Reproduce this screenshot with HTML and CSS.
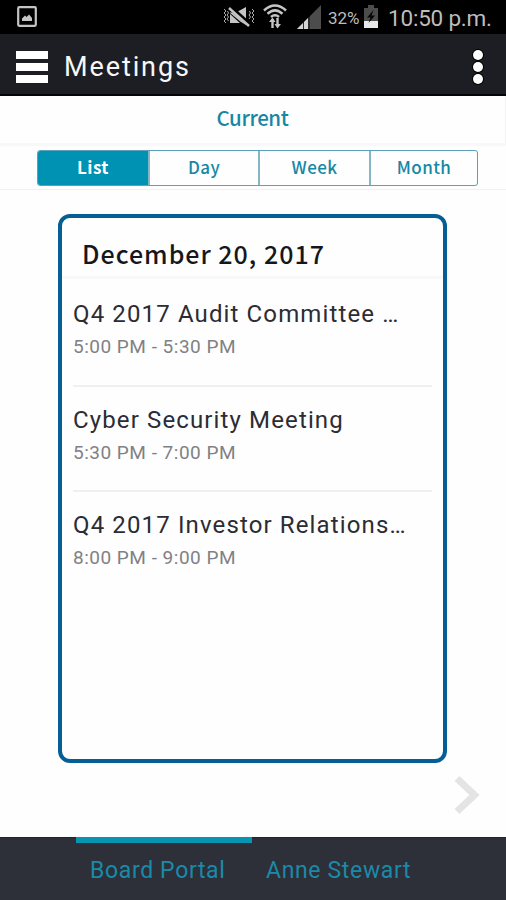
FILE: index.html
```html
<!DOCTYPE html>
<html lang="en">
<head>
<meta charset="utf-8">
<title>Meetings</title>
<link rel="stylesheet" href="styles.css">
</head>
<body>
<div class="status">
  <svg class="status-photo" width="20" height="21" viewBox="0 0 20 21"><rect x="1.2" y="1.2" width="17.6" height="18.6" rx="1" fill="none" stroke="#c4c4c4" stroke-width="2.2"/><path d="M5 15V12.5L8 9.5L9.6 11L12 8.5L15 12V15Z" fill="#c4c4c4"/></svg>
  <svg class="status-mute" width="34" height="22" viewBox="0 0 34 22"><path d="M8 6.5H14L24 1V19L19 16L8 7ZM8 8L18 17H8Z" fill="#c4c4c4"/><path d="M8 1L28 19" stroke="#000" stroke-width="4.500"/><path d="M7 2L27 20" stroke="#c4c4c4" stroke-width="2.400"/><path d="M2 3L4 5L2 7L4 9L2 11L4 13L2 15L4 17M5.500 5L6.500 7L5 9L6.500 11L5 13L6.500 15M30 3L32 5L30 7L32 9L30 11L32 13L30 15L32 17M27.500 5L28.500 7L27 9L28.500 11L27 13" fill="none" stroke="#aaa" stroke-width="1"/></svg>
  <svg class="status-wifi" width="24" height="25" viewBox="0 0 24 25"><path d="M1 6.500Q12 -3.500 23 6.500M4.500 9.800Q12 3 19.500 9.800M8 13Q12 9.500 16 13" fill="none" stroke="#c4c4c4" stroke-width="2.500"/><path d="M9.500 24V15M14.500 14V22" stroke="#c4c4c4" stroke-width="2.400"/><path d="M6 18L9.500 13.500L12.500 18ZM11.500 20H18L14.500 24.500Z" fill="#c4c4c4"/></svg>
  <svg class="status-signal" width="24" height="24" viewBox="0 0 24 24"><path d="M0 24L24 0V24Z" fill="#4c4c4c"/><path d="M0 24L11 13V24Z" fill="#d4d4d4"/><path d="M6.500 17V24M12 11V24" stroke="#000" stroke-width=".8"/></svg>
  <span class="status-percent">32%</span>
  <svg class="status-battery" width="16" height="23" viewBox="0 0 16 23"><path d="M5 0H11V3H15V23H1V3H5Z" fill="#4c4c4c"/><path d="M1 16H15V23H1Z" fill="#e8e8e8"/><path d="M10.500 5L4 12.500H7.500L5.500 18L12 10.500H8.500Z" fill="#050505"/></svg>
  <span class="status-time">10:50 p.m.</span>
</div>
<header class="appbar">
  <div class="burger"><i></i><i></i><i></i></div>
  <h1 class="title">Meetings</h1>
  <div class="dots"><i></i><i></i><i></i></div>
</header>
<div class="current"><span>Current</span></div>
<nav class="views">
  <div class="segments">
    <a class="seg active">List</a><a class="seg">Day</a><a class="seg">Week</a><a class="seg">Month</a>
  </div>
</nav>
<main class="content">
  <section class="card">
    <h2 class="date">December 20, 2017</h2>
    <article class="meeting"><h3>Q4 2017 Audit Committee …</h3><p>5:00 PM - 5:30 PM</p></article>
    <article class="meeting"><h3>Cyber Security Meeting</h3><p>5:30 PM - 7:00 PM</p></article>
    <article class="meeting"><h3>Q4 2017 Investor Relations…</h3><p>8:00 PM - 9:00 PM</p></article>
  </section>
  <svg class="next" width="26" height="40" viewBox="0 0 26 40"><path d="M3 3.500L20.500 20L3 36.500" fill="none" stroke="#e4e4e4" stroke-width="7"/></svg>
</main>
<footer class="tabs">
  <a class="tab selected">Board Portal</a>
  <a class="tab">Anne Stewart</a>
</footer>
</body>
</html>
```

FILE: styles.css
```css
* { box-sizing: border-box; }
body { margin: 0; width: 506px; height: 900px; display: flex; flex-direction: column; overflow: hidden; background: #fefefe; font-family: Roboto, sans-serif; }
h1, h2, h3, p { margin: 0; font-weight: 400; white-space: nowrap; }
.status { height: 34px; flex: none; display: flex; align-items: flex-start; padding-left: 17px; background: #000; color: #bdbdbd; white-space: nowrap; }
.status svg { flex: none; }
.status-photo { margin-top: 6px; }
.status-mute { margin: 6px 0 0 185px; }
.status-wifi { margin: 4px 0 0 7px; }
.status-signal { margin: 5px 0 0 10px; }
.status-percent { width: 34px; margin: 8px 0 0 7px; font-size: 17px; line-height: 20px; }
.status-battery { margin: 5px 0 0 1px; }
.status-time { margin: 5px 0 0 9px; font-size: 22.500px; line-height: 27px; letter-spacing: -.2px; }
.appbar { height: 62px; flex: none; display: flex; align-items: center; padding: 0 23px 0 16px; background: #1d1e23; border-bottom: 2px solid #050508; color: #fff; }
.burger { width: 32px; display: grid; gap: 4px; margin-top: 5px; }
.burger i { height: 8px; background: #fff; }
.title { margin: 5px auto 0 16px; font-size: 27px; line-height: 32px; letter-spacing: 1.900px; color: #f7f7f7; }
.dots { display: grid; gap: 2px; margin-top: 6px; }
.dots i { width: 10px; height: 10px; border-radius: 50%; background: #fff; box-shadow: 0 0 0 1px #000; }
.current { height: 50px; flex: none; display: flex; justify-content: center; border-bottom: 3px solid #f8f8f8; border-right: 1px solid #f4f4f4; color: #1688a5; font: 500 20.500px/42px "Noto Sans CJK SC", sans-serif; letter-spacing: -.4px; }
.views { height: 44px; flex: none; padding: 4px 28px 3px 37px; border-bottom: 1px solid #f1f1f1; }
.segments { height: 36px; display: grid; grid-template-columns: 110px 110px 111px 1fr; border: 1px solid #5aa1b9; border-radius: 3px; overflow: hidden; color: #1688a5; font: 500 17px/32px "Noto Sans CJK SC", sans-serif; letter-spacing: .4px; }
.seg { text-align: center; border-left: 2px solid #83b7c8; }
.seg.active { background: #0092b2; color: #fff; border: 0; font-weight: 700; }
.content { flex: 1; padding: 24px 26px 0 58px; display: flex; flex-direction: column; }
.card { width: 389px; height: 549px; flex: none; border: 4px solid #055f94; border-radius: 12px; }
.date { height: 61px; padding: 12px 0 0 20px; border-bottom: 3px solid #f7f8f8; color: #17171b; font: 500 25px/46px "Noto Sans CJK SC", sans-serif; letter-spacing: 1px; }
.meeting { height: 105.500px; margin: 0 11px; padding-top: 17px; border-bottom: 2px solid #f0f0f0; }
.date + .meeting { height: 107.500px; padding-top: 19px; }
.meeting:last-child { border: 0; }
.meeting h3 { color: #2b2c34; font-size: 24px; line-height: 32px; letter-spacing: 1.130px; }
.meeting p { color: #818185; font-size: 19px; line-height: 26px; margin-top: 4px; letter-spacing: .5px; }
.next { align-self: flex-end; margin-top: 12px; }
.tabs { height: 63px; flex: none; display: flex; padding-left: 76px; background: #2d2f39; border-top: 1px solid #23232c; }
.tab { height: 63px; margin-top: -1px; padding: 15px 14px 0; border-top: 6px solid transparent; color: #1a8aa8; font-size: 23px; line-height: 26px; letter-spacing: .650px; white-space: nowrap; }
.tab.selected { width: 176px; border-color: #0795b3; }
```
